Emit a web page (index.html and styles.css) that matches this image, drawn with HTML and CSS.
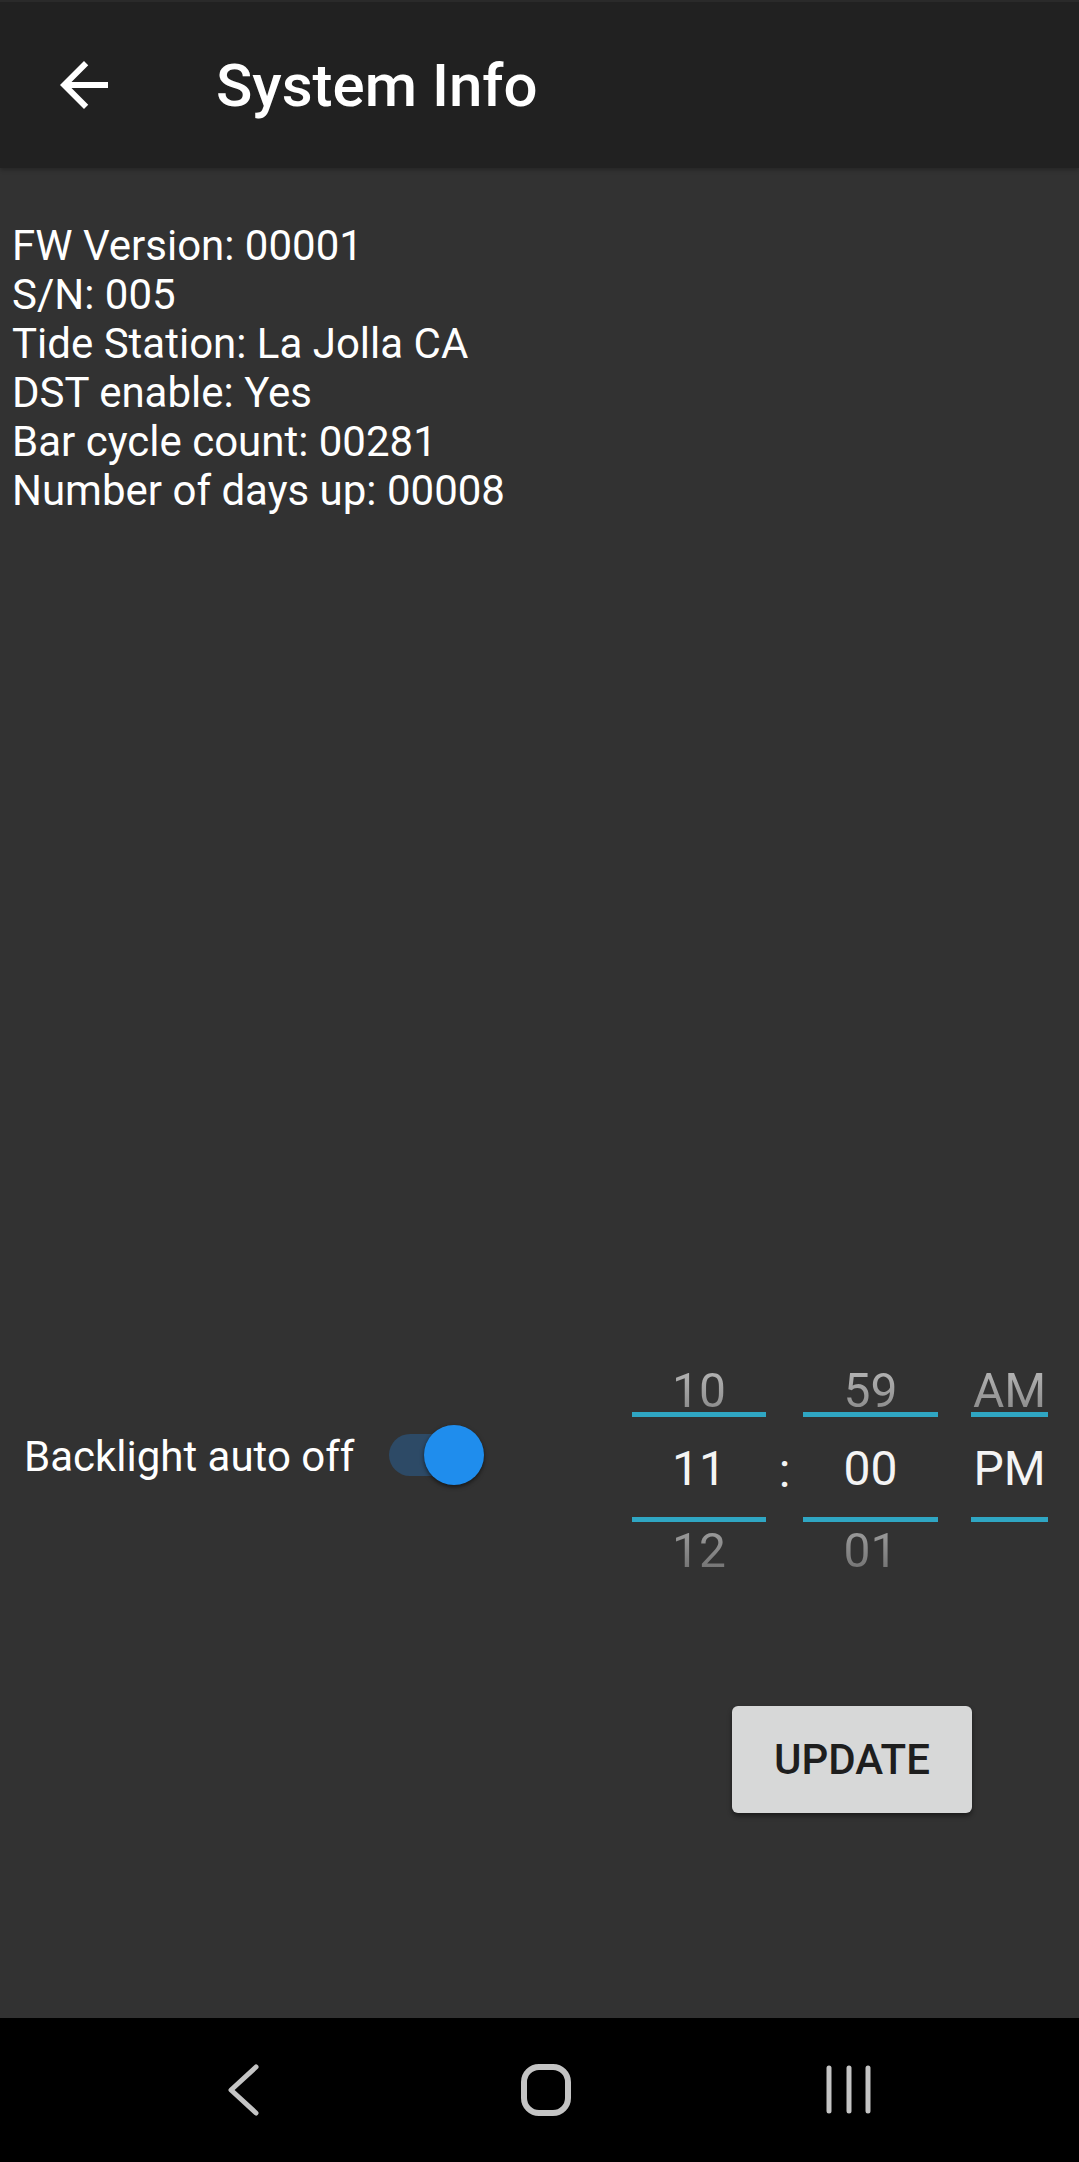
FILE: index.html
```html
<!DOCTYPE html>
<html lang="en">
<head>
<meta charset="utf-8">
<title>System Info</title>
<link rel="stylesheet" href="styles.css">
</head>
<body>
<div class="app">
  <header class="toolbar">
    <button class="nav-back" aria-label="Back">
      <svg viewBox="0 0 24 24" width="72" height="72"><path fill="#ffffff" d="M20 11H7.83l5.59-5.59L12 4l-8 8 8 8 1.41-1.41L7.830 13H20v-2z"/></svg>
    </button>
    <h1 class="title">System Info</h1>
  </header>

  <main class="content">
    <div class="info">
      <div class="info-line">FW Version: 00001</div>
      <div class="info-line">S/N: 005</div>
      <div class="info-line">Tide Station: La Jolla CA</div>
      <div class="info-line">DST enable: Yes</div>
      <div class="info-line">Bar cycle count: 00281</div>
      <div class="info-line">Number of days up: 00008</div>
    </div>

    <div class="controls">
      <div class="backlight">
        <span class="backlight-label">Backlight auto off</span>
        <span class="switch">
          <span class="switch-track"></span>
          <span class="switch-thumb"></span>
        </span>
      </div>

      <div class="picker">
        <div class="pick-col pick-hour">
          <div class="pick-item pick-prev">10</div>
          <div class="pick-divider"></div>
          <div class="pick-item pick-sel">11</div>
          <div class="pick-divider"></div>
          <div class="pick-item pick-next">12</div>
        </div>
        <div class="pick-colon">:</div>
        <div class="pick-col pick-min">
          <div class="pick-item pick-prev">59</div>
          <div class="pick-divider"></div>
          <div class="pick-item pick-sel">00</div>
          <div class="pick-divider"></div>
          <div class="pick-item pick-next">01</div>
        </div>
        <div class="pick-col pick-ampm">
          <div class="pick-item pick-prev">AM</div>
          <div class="pick-divider"></div>
          <div class="pick-item pick-sel">PM</div>
          <div class="pick-divider"></div>
          <div class="pick-item pick-next"></div>
        </div>
      </div>
    </div>

    <div class="actions">
      <button class="update-btn">UPDATE</button>
    </div>
  </main>

  <nav class="sysnav">
    <svg class="sys-icon" viewBox="0 0 60 60" width="60" height="60"><polyline points="43,7 18,30 43,53" fill="none" stroke="#c4c4c4" stroke-width="5" stroke-linecap="round" stroke-linejoin="round"/></svg>
    <svg class="sys-icon" viewBox="0 0 60 60" width="60" height="60"><rect x="8" y="7" width="44" height="46" rx="15" ry="15" fill="none" stroke="#c4c4c4" stroke-width="6"/></svg>
    <svg class="sys-icon" viewBox="0 0 60 60" width="60" height="60"><g stroke="#c4c4c4" stroke-width="5" stroke-linecap="round"><line x1="10" y1="8" x2="10" y2="51"/><line x1="30" y1="8" x2="30" y2="51"/><line x1="49" y1="8" x2="49" y2="51"/></g></svg>
  </nav>
</div>
</body>
</html>
```
FILE: styles.css
```css
* { box-sizing: border-box; }

html, body {
  margin: 0;
  padding: 0;
}

body {
  width: 1079px;
  height: 2162px;
  background: #323232;
  font-family: Roboto, "Noto Sans", "Liberation Sans", sans-serif;
  color: #ffffff;
  overflow: hidden;
}

.app {
  display: flex;
  flex-direction: column;
  height: 2162px;
}

.toolbar {
  flex: 0 0 168px;
  height: 168px;
  background: #212121;
  display: flex;
  align-items: center;
  border-top: 2px solid #2a2a2a;
  box-shadow: 0 2px 4px rgba(0, 0, 0, 0.25);
  position: relative;
  z-index: 1;
}

.nav-back {
  margin-left: 48px;
  width: 72px;
  height: 72px;
  padding: 0;
  border: 0;
  background: transparent;
  display: flex;
}

.title {
  margin: 0 0 0 96px;
  font-size: 60px;
  font-weight: 500;
  line-height: 70px;
  color: #ffffff;
  padding-top: 2px;
}

.content {
  flex: 1 1 auto;
  display: flex;
  flex-direction: column;
}

.info {
  padding: 53px 0 0 12px;
}

.info-line {
  font-size: 42px;
  line-height: 49px;
  color: #ffffff;
}

.controls {
  margin-top: 851px;
  display: flex;
  align-items: flex-start;
  justify-content: space-between;
  padding: 0 31px 0 24px;
}

.backlight {
  margin-top: 66px;
  height: 49px;
  display: flex;
  align-items: center;
}

.backlight-label {
  flex: 0 0 365px;
  font-size: 42px;
  line-height: 49px;
  color: #ffffff;
}

.switch {
  position: relative;
  width: 96px;
  height: 60px;
  margin-top: -4px;
}

.switch-track {
  position: absolute;
  left: 0;
  top: 9px;
  width: 86px;
  height: 42px;
  border-radius: 21px;
  background: #2d4a66;
}

.switch-thumb {
  position: absolute;
  left: 35px;
  top: 0;
  width: 60px;
  height: 60px;
  border-radius: 50%;
  background: #1f8ded;
  box-shadow: 0 2px 4px rgba(0, 0, 0, 0.55);
}

.picker {
  display: flex;
  align-items: flex-start;
}

.pick-col {
  display: flex;
  flex-direction: column;
  align-items: stretch;
}

.pick-hour { width: 134px; }
.pick-min { width: 135px; }
.pick-ampm { width: 77px; margin-left: 33px; }

.pick-item {
  text-align: center;
  font-size: 48px;
  font-weight: 400;
  white-space: nowrap;
}

.pick-prev {
  height: 46px;
  line-height: 50px;
  background: linear-gradient(180deg, #b8b8b8 0%, #8a8a8a 100%);
  -webkit-background-clip: text;
  background-clip: text;
  color: transparent;
}

.pick-sel {
  height: 100px;
  line-height: 96px;
  padding-top: 4px;
  color: #f4f4f4;
}

.pick-next {
  height: 59px;
  line-height: 57px;
  background: linear-gradient(180deg, #a4a4a4 0%, #686868 100%);
  -webkit-background-clip: text;
  background-clip: text;
  color: transparent;
}

.pick-divider {
  height: 5px;
  background: #2fa6c3;
}

.pick-colon {
  width: 37px;
  text-align: center;
  font-size: 48px;
  color: #f4f4f4;
  margin-top: 51px;
  height: 100px;
  line-height: 96px;
  padding-top: 6px;
}

.actions {
  margin-top: 125px;
  display: flex;
  justify-content: flex-end;
  padding-right: 107px;
}

.update-btn {
  width: 240px;
  height: 107px;
  border: 0;
  border-radius: 6px;
  background: #d7d8d8;
  color: #1e1e1e;
  font-family: Roboto, "Noto Sans", "Liberation Sans", sans-serif;
  font-size: 42px;
  font-weight: 500;
  letter-spacing: 0;
  box-shadow: 0 3px 5px rgba(0, 0, 0, 0.45);
  padding: 0;
}

.sysnav {
  flex: 0 0 144px;
  height: 144px;
  background: #000000;
  display: flex;
  align-items: center;
  justify-content: center;
  gap: 243px;
  padding-left: 12px;
}

.sys-icon {
  display: block;
}
```
